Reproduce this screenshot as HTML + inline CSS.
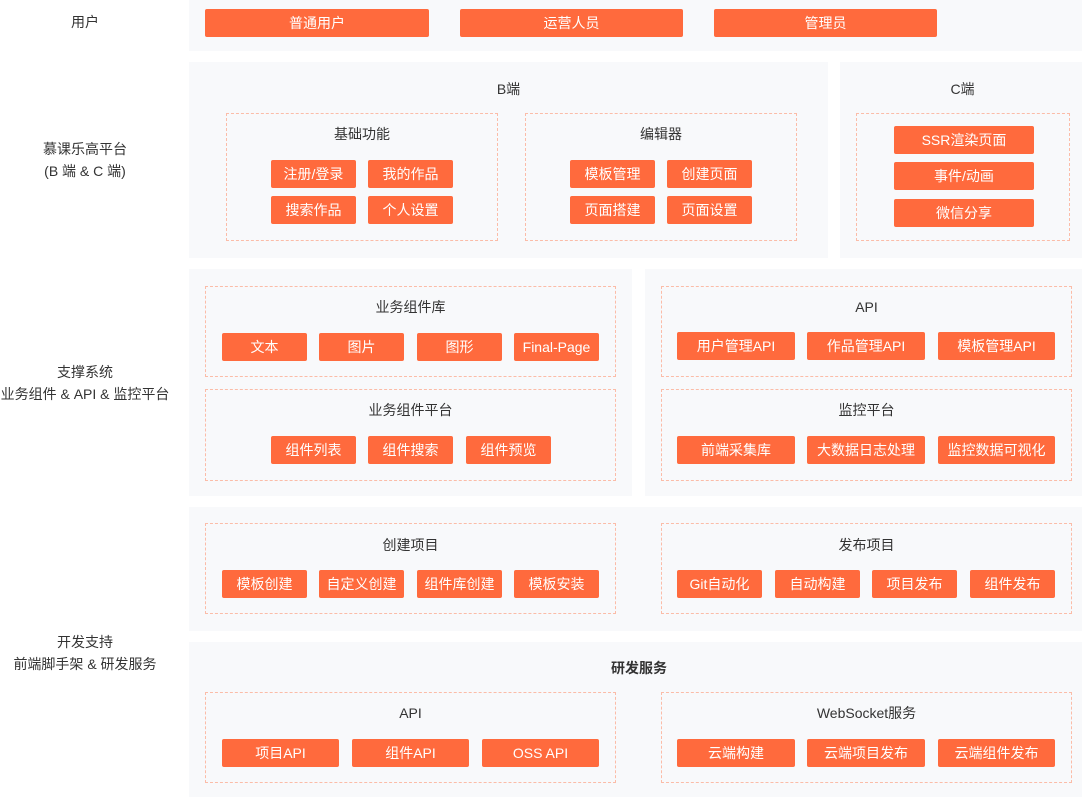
<!DOCTYPE html>
<html><head><meta charset="utf-8"><style>
*{margin:0;padding:0;box-sizing:border-box}
body{width:1082px;height:797px;background:#fff;position:relative;overflow:hidden;font-family:"Liberation Sans","Noto Sans CJK SC",sans-serif;font-size:14px;color:#333}
.p{position:absolute;background:#f8f9fb}
.d{position:absolute;border:1px dashed #fbbca8}
.b{position:absolute;background:#ff6a3d;color:#fff;border-radius:2px;height:28px;line-height:28px;text-align:center;font-size:14px;white-space:nowrap}
.t{position:absolute;text-align:center;line-height:20px;white-space:nowrap;color:#333}
.l{position:absolute;width:170px;text-align:center;line-height:22px;white-space:nowrap;color:#333}
</style></head><body>
<div class="l" style="left:0;top:11px">用户</div>
<div class="l" style="left:0;top:138px">慕课乐高平台<br>(B 端 &amp; C 端)</div>
<div class="l" style="left:0;top:361px">支撑系统<br>业务组件 &amp; API &amp; 监控平台</div>
<div class="l" style="left:0;top:631px">开发支持<br>前端脚手架 &amp; 研发服务</div>

<div class="p" style="left:189px;top:0;width:893px;height:51px"></div>
<div class="b" style="left:205px;top:9px;width:224px">普通用户</div>
<div class="b" style="left:460px;top:9px;width:223px">运营人员</div>
<div class="b" style="left:714px;top:9px;width:223px">管理员</div>

<div class="p" style="left:189px;top:62px;width:639px;height:196px"></div>
<div class="t" style="left:189px;width:639px;top:79px">B端</div>
<div class="d" style="left:226px;top:113px;width:272px;height:128px"></div>
<div class="t" style="left:226px;width:272px;top:124px">基础功能</div>
<div class="b" style="left:271px;top:160px;width:85px">注册/登录</div>
<div class="b" style="left:368px;top:160px;width:85px">我的作品</div>
<div class="b" style="left:271px;top:196px;width:85px">搜索作品</div>
<div class="b" style="left:368px;top:196px;width:85px">个人设置</div>
<div class="d" style="left:525px;top:113px;width:272px;height:128px"></div>
<div class="t" style="left:525px;width:272px;top:124px">编辑器</div>
<div class="b" style="left:570px;top:160px;width:85px">模板管理</div>
<div class="b" style="left:667px;top:160px;width:85px">创建页面</div>
<div class="b" style="left:570px;top:196px;width:85px">页面搭建</div>
<div class="b" style="left:667px;top:196px;width:85px">页面设置</div>

<div class="p" style="left:840px;top:62px;width:242px;height:196px"></div>
<div class="t" style="left:840px;width:245px;top:79px">C端</div>
<div class="d" style="left:856px;top:113px;width:214px;height:128px"></div>
<div class="b" style="left:894px;top:126px;width:140px">SSR渲染页面</div>
<div class="b" style="left:894px;top:162px;width:140px">事件/动画</div>
<div class="b" style="left:894px;top:199px;width:140px">微信分享</div>

<div class="p" style="left:189px;top:269px;width:443px;height:227px"></div>
<div class="d" style="left:205px;top:286px;width:411px;height:91px"></div>
<div class="t" style="left:205px;width:411px;top:297px">业务组件库</div>
<div class="b" style="left:222px;top:333px;width:85px">文本</div>
<div class="b" style="left:319px;top:333px;width:85px">图片</div>
<div class="b" style="left:417px;top:333px;width:85px">图形</div>
<div class="b" style="left:514px;top:333px;width:85px">Final-Page</div>
<div class="d" style="left:205px;top:389px;width:411px;height:92px"></div>
<div class="t" style="left:205px;width:411px;top:400px">业务组件平台</div>
<div class="b" style="left:271px;top:436px;width:85px">组件列表</div>
<div class="b" style="left:368px;top:436px;width:85px">组件搜索</div>
<div class="b" style="left:466px;top:436px;width:85px">组件预览</div>

<div class="p" style="left:645px;top:269px;width:437px;height:227px"></div>
<div class="d" style="left:661px;top:286px;width:411px;height:91px"></div>
<div class="t" style="left:661px;width:411px;top:297px">API</div>
<div class="b" style="left:677px;top:332px;width:118px">用户管理API</div>
<div class="b" style="left:807px;top:332px;width:118px">作品管理API</div>
<div class="b" style="left:938px;top:332px;width:117px">模板管理API</div>
<div class="d" style="left:661px;top:389px;width:411px;height:92px"></div>
<div class="t" style="left:661px;width:411px;top:400px">监控平台</div>
<div class="b" style="left:677px;top:436px;width:118px">前端采集库</div>
<div class="b" style="left:807px;top:436px;width:118px">大数据日志处理</div>
<div class="b" style="left:938px;top:436px;width:117px">监控数据可视化</div>

<div class="p" style="left:189px;top:507px;width:893px;height:124px"></div>
<div class="d" style="left:205px;top:523px;width:411px;height:91px"></div>
<div class="t" style="left:205px;width:411px;top:535px">创建项目</div>
<div class="b" style="left:222px;top:570px;width:85px">模板创建</div>
<div class="b" style="left:319px;top:570px;width:85px">自定义创建</div>
<div class="b" style="left:417px;top:570px;width:85px">组件库创建</div>
<div class="b" style="left:514px;top:570px;width:85px">模板安装</div>
<div class="d" style="left:661px;top:523px;width:411px;height:91px"></div>
<div class="t" style="left:661px;width:411px;top:535px">发布项目</div>
<div class="b" style="left:677px;top:570px;width:85px">Git自动化</div>
<div class="b" style="left:775px;top:570px;width:85px">自动构建</div>
<div class="b" style="left:872px;top:570px;width:85px">项目发布</div>
<div class="b" style="left:970px;top:570px;width:85px">组件发布</div>

<div class="p" style="left:189px;top:642px;width:893px;height:155px"></div>
<div class="t" style="left:189px;width:900px;top:658px;font-weight:bold">研发服务</div>
<div class="d" style="left:205px;top:692px;width:411px;height:91px"></div>
<div class="t" style="left:205px;width:411px;top:703px">API</div>
<div class="b" style="left:222px;top:739px;width:117px">项目API</div>
<div class="b" style="left:352px;top:739px;width:117px">组件API</div>
<div class="b" style="left:482px;top:739px;width:117px">OSS API</div>
<div class="d" style="left:661px;top:692px;width:411px;height:91px"></div>
<div class="t" style="left:661px;width:411px;top:703px">WebSocket服务</div>
<div class="b" style="left:677px;top:739px;width:118px">云端构建</div>
<div class="b" style="left:807px;top:739px;width:118px">云端项目发布</div>
<div class="b" style="left:938px;top:739px;width:117px">云端组件发布</div>
</body></html>
